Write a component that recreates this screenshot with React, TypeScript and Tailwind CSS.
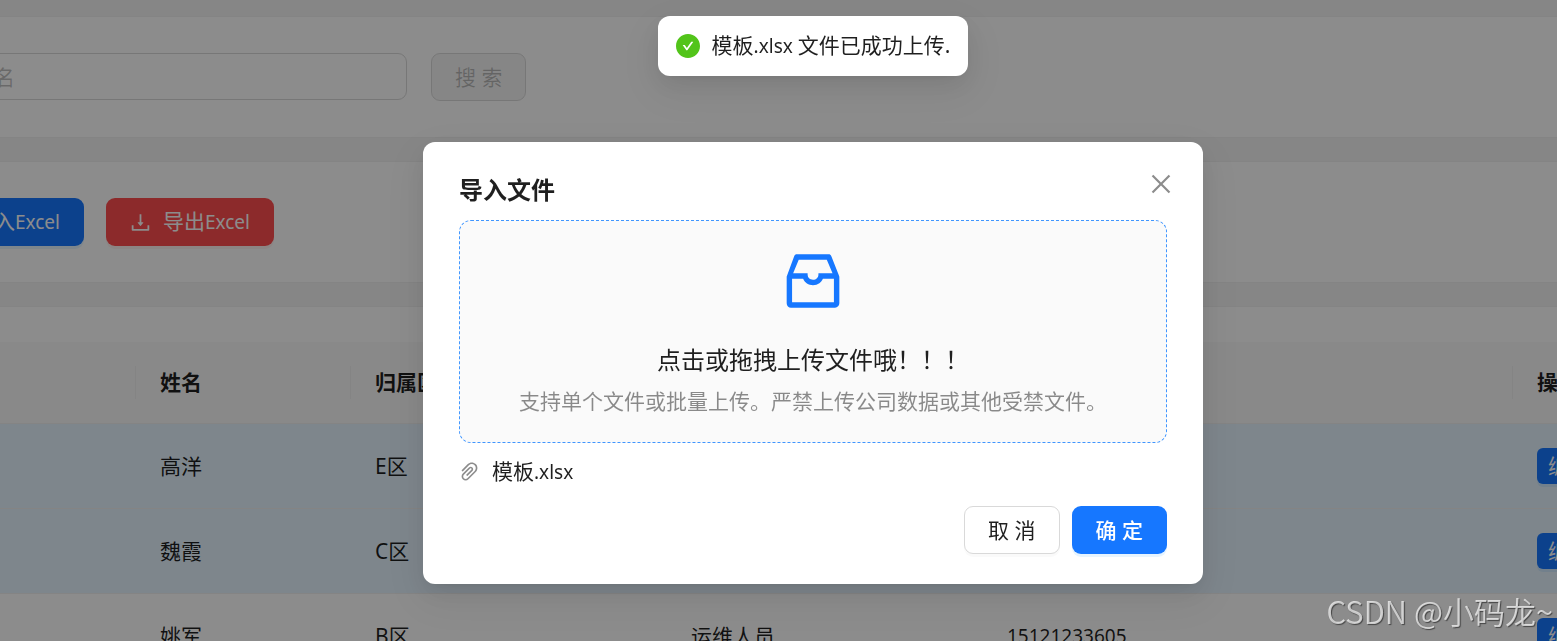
import type { ReactNode } from "react";
import {
  AiFillCheckCircle,
  AiOutlineClose,
  AiOutlineDownload,
  AiOutlineInbox,
  AiOutlinePaperClip,
  AiOutlineUpload,
} from "react-icons/ai";

// Crops the empty margin that the Ant icons carry round their glyph.
const TIGHT = "64 64 896 896";

const rows = [
  { name: "高洋", area: "E区", role: "", phone: "", selected: true },
  { name: "魏霞", area: "C区", role: "", phone: "", selected: true },
  { name: "姚军", area: "B区", role: "运维人员", phone: "15121233605", selected: false },
];

const headers = ["", "姓名", "归属区域", "", "", "操作"];

// Latin runs sit a little smaller than the Chinese text beside them.
function Latin({ children }: { children: ReactNode }) {
  return <span className="text-[19px]">{children}</span>;
}

function SearchCard() {
  return (
    <section className="rounded-xl border border-[#f0f0f0] bg-white p-9">
      <form className="flex items-start gap-6" onSubmit={(e) => e.preventDefault()}>
        <input
          aria-label="姓名"
          placeholder="请输入姓名"
          className="h-[47px] w-[514px] rounded-[9px] border border-[#d9d9d9] bg-white px-4 placeholder:text-black/25"
        />
        <button
          type="submit"
          disabled
          className="h-12 rounded-[9px] border border-[#d9d9d9] bg-black/4 px-[23px] text-black/25"
        >
          搜 索
        </button>
      </form>
    </section>
  );
}

function ActionCard() {
  return (
    <section className="flex gap-[22px] rounded-xl border border-[#f0f0f0] bg-white py-9 pl-[59px]">
      <button className="flex h-12 items-center gap-3 rounded-[9px] bg-[#1677ff] px-6 text-white shadow-[0_3px_0_rgba(5,145,255,0.1)]">
        <AiOutlineUpload viewBox={TIGHT} />
        <span>
          导入<Latin>Excel</Latin>
        </span>
      </button>
      <button className="flex h-12 items-center gap-3 rounded-[9px] bg-[#ff4d4f] px-6 text-white shadow-[0_3px_0_rgba(255,38,5,0.06)]">
        <AiOutlineDownload viewBox={TIGHT} />
        <span>
          导出<Latin>Excel</Latin>
        </span>
      </button>
    </section>
  );
}

function StaffTable() {
  return (
    <section className="rounded-xl border border-[#f0f0f0] bg-white px-[35px] pt-[35px]">
      <table className="w-full table-fixed border-separate border-spacing-0 whitespace-nowrap text-left">
        <colgroup>
          <col className="w-[244px]" />
          <col className="w-[215px]" />
          <col className="w-[316px]" />
          <col className="w-[316px]" />
          <col className="w-[530px]" />
          <col />
        </colgroup>
        <thead>
          <tr className="h-[82px] bg-[#fafafa]">
            {headers.map((h, i) => (
              <th key={i} className="border-b border-[#f0f0f0] p-0 font-bold">
                <div
                  className={
                    i === headers.length - 1
                      ? "h-[33px] px-6"
                      : "h-[33px] border-r border-[#f0f0f0] px-6"
                  }
                >
                  {h}
                </div>
              </th>
            ))}
          </tr>
        </thead>
        <tbody>
          {rows.map((r) => (
            <tr
              key={r.name}
              className={
                r.selected
                  ? "h-[85px] bg-[#e6f4ff] *:border-b *:border-[#f0f0f0]"
                  : "h-[85px] bg-white *:border-b *:border-[#f0f0f0]"
              }
            >
              <td />
              <td className="px-6">{r.name}</td>
              <td className="px-6">{r.area}</td>
              <td className="px-6">{r.role}</td>
              <td className="px-6">
                <Latin>{r.phone}</Latin>
              </td>
              <td className="px-6">
                <button className="block h-9 rounded-md bg-[#1677ff] px-[11px] text-white shadow-[0_3px_0_rgba(5,145,255,0.1)]">
                  编辑
                </button>
              </td>
            </tr>
          ))}
        </tbody>
      </table>
    </section>
  );
}

function Toast() {
  return (
    <div
      role="status"
      className="flex h-[60px] items-center gap-3 rounded-xl bg-white px-[18px] shadow-[0_9px_24px_rgba(0,0,0,0.08),0_4px_9px_-6px_rgba(0,0,0,0.12),0_14px_42px_12px_rgba(0,0,0,0.05)]"
    >
      <AiFillCheckCircle viewBox={TIGHT} className="size-6 text-[#52c41a]" />
      <span>
        模板<Latin>.xlsx </Latin>文件已成功上传.
      </span>
    </div>
  );
}

function ImportDialog() {
  return (
    <div
      role="dialog"
      aria-labelledby="import-title"
      className="w-[780px] rounded-xl bg-white px-9 py-[30px] shadow-[0_9px_24px_rgba(0,0,0,0.08),0_4px_9px_-6px_rgba(0,0,0,0.12),0_14px_42px_12px_rgba(0,0,0,0.05)]"
    >
      <header className="flex h-9 items-end justify-between">
        <h2 id="import-title" className="text-2xl leading-9 font-bold">
          导入文件
        </h2>
        <button
          aria-label="关闭"
          className="-mr-[18px] flex size-12 items-center justify-center text-black/45"
        >
          <AiOutlineClose viewBox={TIGHT} className="size-6" />
        </button>
      </header>
      <button className="mt-3 flex w-full flex-col items-center rounded-xl border border-dashed border-[#4096ff] bg-[#fafafa] py-6">
        <AiOutlineInbox className="mb-6 size-[72px] text-[#1677ff]" />
        <span className="mb-[6px] text-2xl leading-[38px]">点击或拖拽上传文件哦！！！</span>
        <span className="text-black/45">支持单个文件或批量上传。严禁上传公司数据或其他受禁文件。</span>
      </button>
      <div className="mt-3 flex h-[33px] items-center gap-3">
        <AiOutlinePaperClip viewBox={TIGHT} className="text-black/45" />
        <span>
          模板<Latin>.xlsx</Latin>
        </span>
      </div>
      <footer className="mt-[18px] flex justify-end gap-3">
        <button className="h-12 rounded-[9px] border border-[#d9d9d9] bg-white px-[23px] shadow-[0_3px_0_rgba(0,0,0,0.02)]">
          取 消
        </button>
        <button className="h-12 rounded-[9px] bg-[#1677ff] px-6 font-medium text-white shadow-[0_3px_0_rgba(5,145,255,0.1)]">
          确 定
        </button>
      </footer>
    </div>
  );
}

export default function App() {
  return (
    <div className="relative h-screen overflow-hidden bg-[#f5f5f5] font-['Noto_Sans','Noto_Sans_CJK_SC',sans-serif] text-[21px] leading-[33px] text-black/88">
      <main className="-mx-36 flex flex-col gap-[23px] pt-4">
        <SearchCard />
        <ActionCard />
        <StaffTable />
      </main>
      <div className="fixed inset-0 flex justify-center bg-black/45 pt-[142px] pl-[69px]">
        <div>
          <ImportDialog />
        </div>
      </div>
      <div className="pointer-events-none fixed inset-x-0 top-4 flex justify-center pl-[69px]">
        <Toast />
      </div>
      <div className="pointer-events-none fixed right-1 bottom-[7px] font-['Noto_Sans_CJK_SC',sans-serif] text-[31px] leading-[46px] font-[350] text-white/70 [text-shadow:1px_1px_1px_rgba(0,0,0,0.5)]">
        CSDN @小码龙~
      </div>
    </div>
  );
}
